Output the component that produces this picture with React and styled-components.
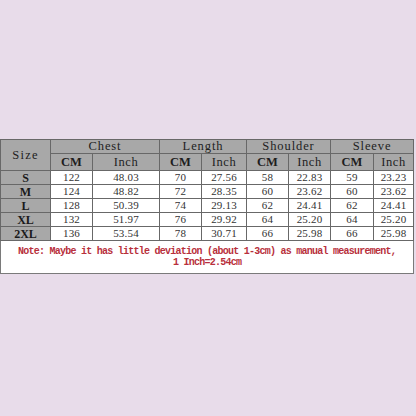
import React from 'react'
import styled, { createGlobalStyle } from 'styled-components'

const GlobalStyle = createGlobalStyle`
    html, body {
        margin: 0;
        padding: 0;
        background: #e8dcea;
    }
`

const widths = [50, 42, 67, 42, 45, 42, 42, 43, 40]

const groups = ['Chest', 'Length', 'Shoulder', 'Sleeve']

const rows = [
    ['S', '122', '48.03', '70', '27.56', '58', '22.83', '59', '23.23'],
    ['M', '124', '48.82', '72', '28.35', '60', '23.62', '60', '23.62'],
    ['L', '128', '50.39', '74', '29.13', '62', '24.41', '62', '24.41'],
    ['XL', '132', '51.97', '76', '29.92', '64', '25.20', '64', '25.20'],
    ['2XL', '136', '53.54', '78', '30.71', '66', '25.98', '66', '25.98'],
]

const App = () => {
    return (
        <Page>
            <GlobalStyle />
            <Chart>
                <colgroup>
                    {widths.map((w, i) => (
                        <col key={i} style={{ width: w }} />
                    ))}
                </colgroup>
                <tbody>
                    <GroupRow>
                        <SizeHead rowSpan={2}>Size</SizeHead>
                        {groups.map((g) => (
                            <GroupHead key={g} colSpan={2}>{g}</GroupHead>
                        ))}
                    </GroupRow>
                    <UnitRow>
                        {groups.map((g) => (
                            <React.Fragment key={g}>
                                <UnitHead $bold>CM</UnitHead>
                                <UnitHead>Inch</UnitHead>
                            </React.Fragment>
                        ))}
                    </UnitRow>
                    {rows.map((r) => (
                        <DataRow key={r[0]}>
                            <SizeCell>{r[0]}</SizeCell>
                            {r.slice(1).map((v, i) => (
                                <Cell key={i}>{v}</Cell>
                            ))}
                        </DataRow>
                    ))}
                    <NoteRow>
                        <Note colSpan={9}>
                            Note: Maybe it has little deviation (about 1-3cm) as manual measurement,
                            <br />
                            1 Inch=2.54cm
                        </Note>
                    </NoteRow>
                </tbody>
            </Chart>
        </Page>
    )
}

const Page = styled.div`
    width: 416px;
    height: 416px;
    padding-top: 139px;
    box-sizing: border-box;
    background: #e8dcea;
    overflow: hidden;
`

const Chart = styled.table`
    width: 413px;
    table-layout: fixed;
    border-collapse: collapse;
    background: #ffffff;
    font-family: "Liberation Serif", "DejaVu Serif", serif;
    color: #262626;
    td {
        padding: 0;
        text-align: center;
        vertical-align: middle;
        border: 1px solid #686868;
        white-space: nowrap;
        overflow: hidden;
    }
`

const GroupRow = styled.tr`
    height: 14px;
`

const UnitRow = styled.tr`
    height: 17px;
`

const DataRow = styled.tr`
    height: 14px;
`

const NoteRow = styled.tr`
    height: 33px;
`

const SizeHead = styled.td`
    background: #a8a8a8;
    font-size: 12.5px;
    letter-spacing: 1.3px;
    line-height: 1;
    color: #1e1e1e;
`

const GroupHead = styled.td`
    background: #a8a8a8;
    font-size: 12.5px;
    letter-spacing: 0.9px;
    line-height: 1;
    color: #1e1e1e;
`

const UnitHead = styled.td`
    background: #a8a8a8;
    font-size: 12.5px;
    letter-spacing: ${(p) => (p.$bold ? '0' : '0.6px')};
    font-weight: ${(p) => (p.$bold ? 'bold' : 'normal')};
    line-height: 1;
    color: #1e1e1e;
`

const SizeCell = styled.td`
    background: #a8a8a8;
    font-size: 12px;
    font-weight: bold;
    line-height: 1;
    color: #1a1a1a;
`

const Cell = styled.td`
    font-size: 11px;
    letter-spacing: 0.2px;
    line-height: 1;
    color: #333333;
    background: #ffffff;
`

const Note = styled.td`
    font-family: "Liberation Mono", monospace;
    font-size: 10px;
    font-weight: bold;
    letter-spacing: -0.75px;
    line-height: 11px;
    color: #b8303c;
    background: #ffffff;
    && {
        white-space: normal;
        border-color: #7a7a7a;
    }
`

export default App
